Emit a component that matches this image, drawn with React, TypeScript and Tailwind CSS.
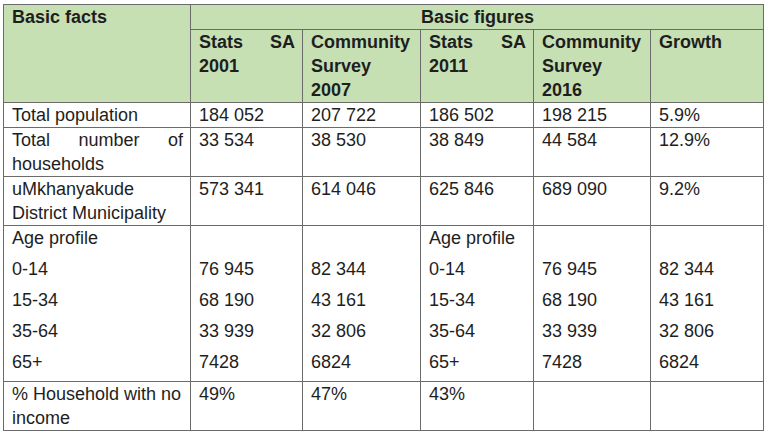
import React from "react";

const td = "border border-[#6b6b6b] pl-[8px] pr-[7px] py-0 align-top text-justify";
const th = "border border-[#6b6b6b] pl-[8px] pr-[7px] py-0 align-top text-justify font-bold bg-[#c6e0b4]";

const ageLabels = ["Age profile", "0-14", "15-34", "35-64", "65+"];
const colA = ["", "76 945", "68 190", "33 939", "7428"];
const colB = ["", "82 344", "43 161", "32 806", "6824"];

function Stack({ items }: { items: string[] }) {
  return (
    <>
      {items.map((t, i) => (
        <div key={i} className="mb-[7px] h-[24px]">
          {t}
        </div>
      ))}
    </>
  );
}

export default function App() {
  return (
    <div className="w-[768px] h-[434px] bg-white overflow-hidden">
      <table
        className="ml-[3px] mt-[4px] border-collapse table-fixed text-[18px] leading-[24px] text-[#1e1e1e]"
        style={{ fontFamily: '"Liberation Sans", Arial, sans-serif', width: 761 }}
      >
        <colgroup>
          <col className="w-[187px]" />
          <col className="w-[112px]" />
          <col className="w-[118px]" />
          <col className="w-[113px]" />
          <col className="w-[117px]" />
          <col className="w-[113px]" />
        </colgroup>
        <tbody>
          <tr>
            <td rowSpan={2} className={th + " text-left"}>
              Basic facts
            </td>
            <td colSpan={5} className={th + " !text-center"}>
              Basic figures
            </td>
          </tr>
          <tr>
            <td className={th}>Stats SA 2001</td>
            <td className={th + " !text-left"}>Community Survey 2007</td>
            <td className={th}>Stats SA 2011</td>
            <td className={th + " !text-left"}>Community Survey 2016</td>
            <td className={th}>Growth</td>
          </tr>
          <tr>
            <td className={td}>Total population</td>
            <td className={td}>184 052</td>
            <td className={td}>207 722</td>
            <td className={td}>186 502</td>
            <td className={td}>198 215</td>
            <td className={td}>5.9%</td>
          </tr>
          <tr>
            <td className={td}>Total number of households</td>
            <td className={td}>33 534</td>
            <td className={td}>38 530</td>
            <td className={td}>38 849</td>
            <td className={td}>44 584</td>
            <td className={td}>12.9%</td>
          </tr>
          <tr>
            <td className={td + " !text-left"}>uMkhanyakude District Municipality</td>
            <td className={td}>573 341</td>
            <td className={td}>614 046</td>
            <td className={td}>625 846</td>
            <td className={td}>689 090</td>
            <td className={td}>9.2%</td>
          </tr>
          <tr>
            <td className={td}>
              <Stack items={ageLabels} />
            </td>
            <td className={td}>
              <Stack items={colA} />
            </td>
            <td className={td}>
              <Stack items={colB} />
            </td>
            <td className={td}>
              <Stack items={ageLabels} />
            </td>
            <td className={td}>
              <Stack items={colA} />
            </td>
            <td className={td}>
              <Stack items={colB} />
            </td>
          </tr>
          <tr>
            <td className={td + " !text-left"}>% Household with no income</td>
            <td className={td}>49%</td>
            <td className={td}>47%</td>
            <td className={td}>43%</td>
            <td className={td}>
              <div className="h-[48px]" />
            </td>
            <td className={td}></td>
          </tr>
        </tbody>
      </table>
    </div>
  );
}
